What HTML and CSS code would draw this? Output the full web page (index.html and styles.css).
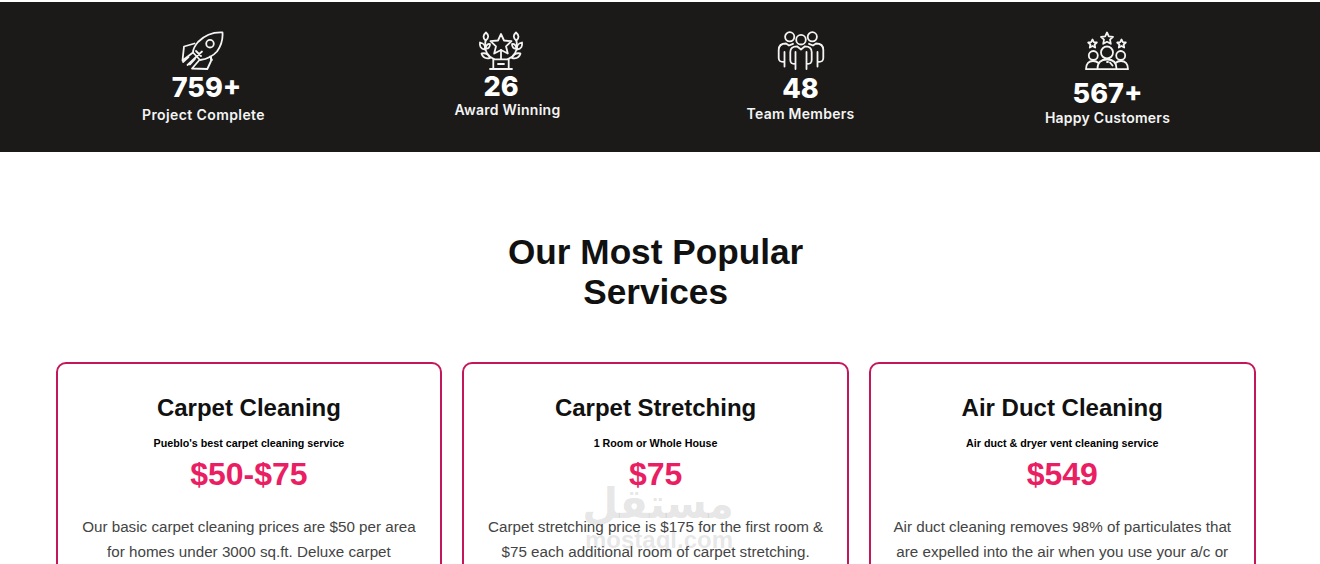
FILE: index.html
```
<!DOCTYPE html>
<html lang="en">
<head>
    <meta charset="UTF-8">
    <meta name="viewport" content="width=device-width, initial-scale=1.0">
    <title>Carpet Cleaning Services</title>
    <link rel="stylesheet" href="styles.css">
</head>
<body>
    <section class="stats">
        <div class="stat stat-projects">
            <svg class="stat-icon" width="44" height="40" viewBox="0 0 44 40">
                <path d="M41.500 1.500C31 1 23 5 17 11C14 14.500 12 18 12 21.500L19 29C26 28 32 25 36 20.500C40 15 42 8 41.500 1.500Z"/>
                <circle cx="29" cy="12.700" r="3.800"/>
                <path d="M13.500 12.500L3 15.500L1.500 29.500L12 21.500M30 26V30L26.300 38L11 37.500L18 29.500"/>
                <path d="M21 20.500L6.500 34M14 28L9 33.500M7.500 26L2 31M15 20L20 25M29 25.500L31 29"/>
            </svg>
            <div class="stat-number">759+</div>
            <div class="stat-label">Project Complete</div>
        </div>
        <div class="stat stat-awards">
            <svg class="stat-icon" width="46" height="40" viewBox="0 0 46 40">
                <path d="M23 3L26 9.500L33.500 10.200L28 15.300L29.800 22.500L23 19L16.200 22.500L18 15.300L12.500 10.200L20 9.500Z"/>
                <path d="M23 19V28M15.300 28.300H30.700V38M15.300 28.300V38M12 38H34M20 33H26"/>
                <path d="M7.700 9C6 18 8 25 16 28M38.300 9C40 18 38 25 30 28"/>
                <path d="M7.700 9.500C4.500 7 5 4 8 1.500C11 4 11 7 7.700 9.500ZM7 18.500C2.500 18 1.500 15 2 11.500C6 12.500 7.500 14 7 18.500ZM12 27C7.500 28 4.500 26 3.500 22.500C8 21.500 10.500 23 12 27ZM7.500 17.500C8 14 10 12.500 12 13C12 16 10.500 18 7.500 17.500Z"/>
                <path d="M38.300 9.500C41.500 7 41 4 38 1.500C35 4 35 7 38.300 9.500ZM39 18.500C43.500 18 44.500 15 44 11.500C40 12.500 38.500 14 39 18.500ZM34 27C38.500 28 41.500 26 42.500 22.500C38 21.500 35.500 23 34 27ZM38.500 17.500C38 14 36 12.500 34 13C34 16 35.500 18 38.500 17.500Z"/>
            </svg>
            <div class="stat-number">26</div>
            <div class="stat-label">Award Winning</div>
        </div>
        <div class="stat stat-team">
            <svg class="stat-icon" width="48" height="40" viewBox="0 0 48 40">
                <circle cx="12.700" cy="5.800" r="4.600"/>
                <circle cx="35.300" cy="5.800" r="4.600"/>
                <circle cx="24" cy="8.700" r="4.800"/>
                <path d="M18.500 38V21M18.500 33C14.500 33 13.300 32 13.300 29V21C13.300 17 16 15.300 20 15.300L24 18.500L28 15.300C32 15.300 34.700 17 34.700 21V29C34.700 32 33.500 33 29.500 33M29.500 21V38"/>
                <path d="M7.500 35.500V21M7.500 31C3 31 1.700 30 1.700 27V19C1.700 14.500 4.500 12.500 9 12.500L12 14.500L16 12.800M40.500 35.500V21M40.500 31C45 31 46.300 30 46.300 27V19C46.300 14.500 43.500 12.500 39 12.500L36 14.500L32 12.800"/>
            </svg>
            <div class="stat-number">48</div>
            <div class="stat-label">Team Members</div>
        </div>
        <div class="stat stat-customers">
            <svg class="stat-icon" width="44" height="40" viewBox="0 0.500 44 40">
                <path d="M22 2L23.800 5.800L28 6.300L25 9.200L25.800 13.300L22 11.300L18.200 13.300L19 9.200L16 6.300L20.200 5.800Z"/>
                <path d="M7.500 9L8.800 11.600L11.800 12L9.600 14L10.200 17L7.500 15.500L4.800 17L5.400 14L3.200 12L6.200 11.600Z"/>
                <path d="M36.500 9L37.800 11.600L40.800 12L38.600 14L39.200 17L36.500 15.500L33.800 17L34.400 14L32.200 12L35.200 11.600Z"/>
                <circle cx="22" cy="22" r="6"/>
                <circle cx="8.300" cy="25" r="4.500"/>
                <circle cx="35.700" cy="25" r="4.500"/>
                <path d="M1 38.700H43C43 33 40 30.500 36 30.500C34 30.500 32 31 30.500 32.500M1 38.700C1 33 4 30.500 8 30.500C10 30.500 12 31 13.500 32.500M12.500 38C12.500 32 16 29 22 29S31.500 32 31.500 38M22 31.500H23M25 32L27.500 35"/>
            </svg>
            <div class="stat-number">567+</div>
            <div class="stat-label">Happy Customers</div>
        </div>
    </section>

    <section class="services">
        <h2>Our Most Popular Services</h2>

        <div class="cards">
            <div class="card">
                <h3>Carpet Cleaning</h3>
                <h6>Pueblo's best carpet cleaning service</h6>
                <div class="price">$50-$75</div>
                <p>Our basic carpet cleaning prices are $50 per area for homes under 3000 sq.ft. Deluxe carpet</p>
            </div>
            <div class="card">
                <h3>Carpet Stretching</h3>
                <h6>1 Room or Whole House</h6>
                <div class="price">$75</div>
                <p>Carpet stretching price is $175 for the first room &amp; $75 each additional room of carpet stretching.</p>
            </div>
            <div class="card">
                <h3>Air Duct Cleaning</h3>
                <h6>Air duct &amp; dryer vent cleaning service</h6>
                <div class="price">$549</div>
                <p>Air duct cleaning removes 98% of particulates that are expelled into the air when you use your a/c or</p>
            </div>
        </div>
    </section>

    <div class="watermark">
        <div class="watermark-name" lang="ar" dir="rtl">مستقل</div>
        <div class="watermark-domain">mostaql.com</div>
    </div>
</body>
</html>
```
FILE: styles.css
```
:root {
    --dark: #1b1a18;
    --pink: #e91e63;
    --border-pink: #c2185b;
}

* {
    box-sizing: border-box;
    margin: 0;
    padding: 0;
}

body {
    position: relative;
    height: 564px;
    padding-top: 2px;
    overflow: hidden;
    background: #fff;
    font-family: 'Liberation Sans', Arial, sans-serif;
}

.stats {
    display: flex;
    justify-content: space-between;
    height: 150px;
    padding: 29px 150px 0 141px;
    background: var(--dark);
    color: #fff;
    font-family: Inter, sans-serif;
}

.stat {
    display: flex;
    flex-direction: column;
    align-items: center;
    width: 125px;
    white-space: nowrap;
}

.stat-icon {
    flex: none;
    fill: none;
    stroke: #f4f4f4;
    stroke-width: 1.8;
    stroke-linejoin: round;
    stroke-linecap: round;
}

.stat-number {
    margin-top: 2px;
    font-size: 27px;
    font-weight: 800;
    line-height: 30px;
}

.stat-label {
    margin-top: 3px;
    font-size: 14px;
    font-weight: 600;
    line-height: 18px;
    letter-spacing: 0.25px;
    color: #f4f4f4;
}

.stat-projects .stat-icon {
    margin-right: 2px;
}

.stat-projects .stat-number {
    padding-left: 6px;
}

.stat-projects .stat-label {
    letter-spacing: 0.4px;
}

.stat-awards {
    width: 107px;
}

.stat-awards .stat-icon,
.stat-awards .stat-number {
    margin-right: 13px;
}

.stat-awards .stat-number {
    margin-top: 1px;
}

.stat-awards .stat-label {
    margin-top: -1px;
}

.stat-team {
    width: 108px;
    padding-right: 5px;
}

.stat-team .stat-number {
    margin-top: 3px;
}

.stat-team .stat-label {
    margin-top: 1px;
}

.stat-customers .stat-icon {
    margin-right: 1px;
}

.stat-customers .stat-number {
    margin-top: 8px;
}

.stat-customers .stat-label {
    margin-top: 0;
}

.services {
    width: 1200px;
    margin-left: 55.6px;
    padding-top: 80px;
}

h2 {
    width: 400px;
    margin: 0 auto 50px;
    color: #111;
    font-size: 35.2px;
    line-height: 40px;
    text-align: center;
}

.cards {
    display: grid;
    grid-template-columns: repeat(3, 1fr);
    gap: 20px;
}

.card {
    height: 300px;
    padding: 30px 20px;
    border: 2px solid var(--border-pink);
    border-radius: 10px;
    text-align: center;
}

h3 {
    color: #111;
    font-size: 24px;
    line-height: 28px;
}

h6 {
    margin-top: 14px;
    color: #000;
    font-size: 10.72px;
    line-height: 14px;
}

.price {
    margin-top: 5px;
    color: var(--pink);
    font-size: 32px;
    font-weight: bold;
    line-height: 38px;
}

.card p {
    margin-top: 21px;
    color: #444;
    font-size: 15.2px;
    line-height: 25px;
}

.watermark {
    position: absolute;
    left: 585px;
    top: 480px;
    width: 149px;
    color: rgba(128, 128, 128, 0.2);
    font-weight: bold;
    white-space: nowrap;
}

.watermark-name {
    height: 47px;
    font-family: 'DejaVu Sans', sans-serif;
    font-size: 41.5px;
    line-height: 48px;
}

.watermark-domain {
    height: 25px;
    font-size: 24px;
    line-height: 25px;
}
```
